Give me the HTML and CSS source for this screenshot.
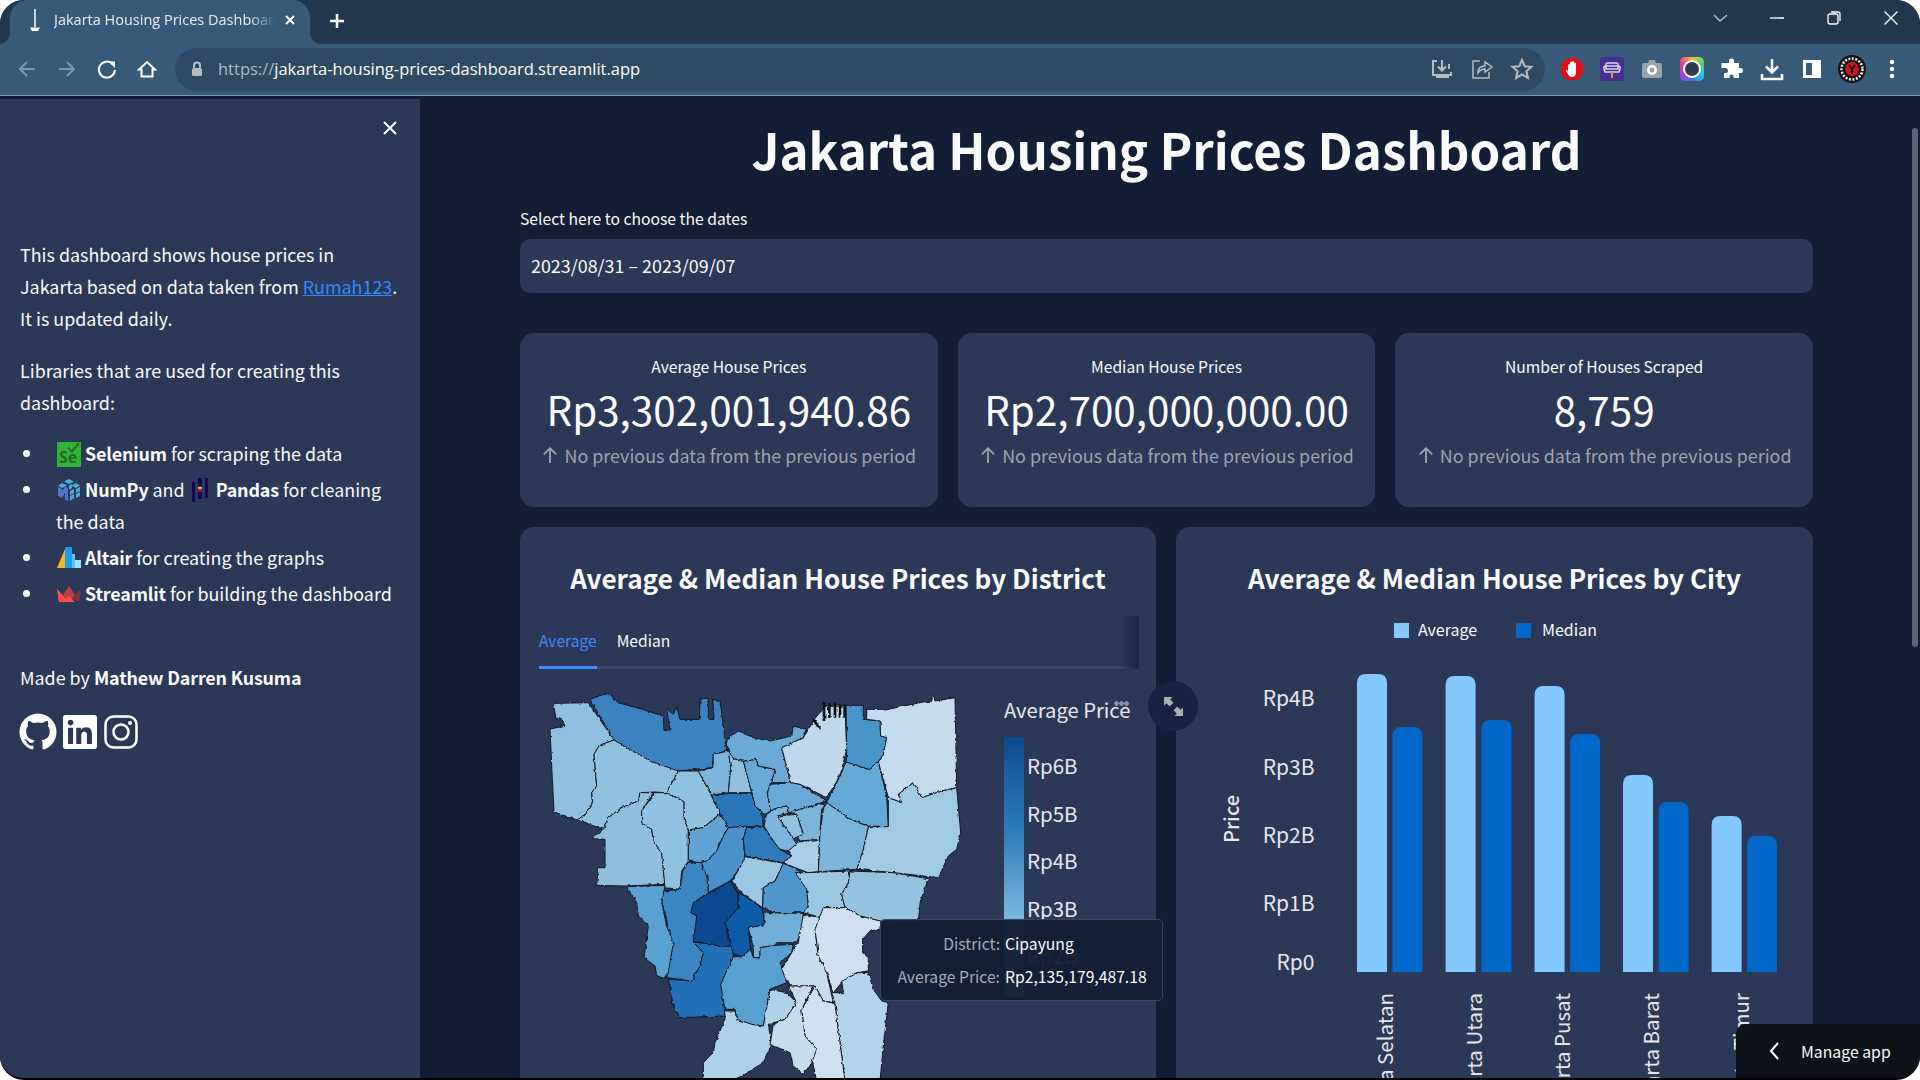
FILE: index.html
```html
<!DOCTYPE html>
<html lang="en">
<head>
<meta charset="utf-8">
<title>Jakarta Housing Prices Dashboard</title>
<link rel="stylesheet" href="styles.css">
</head>
<body>
<div class="window">
  <div class="tabstrip">
    <div class="tab">
      <svg class="favicon" viewBox="0 0 14 24"><path d="M7 1V19" class="st-w st15"/><path d="M2 19.500H12L10 23H4Z" class="fl-w"/></svg>
      <span class="tab-title">Jakarta Housing Prices Dashboard</span>
      <svg class="tab-x" viewBox="0 0 12 12"><path d="M2 2L10 10M10 2L2 10" class="st-w st2"/></svg>
    </div>
    <svg class="tab-plus" viewBox="0 0 20 20"><path d="M10 3V17M3 10H17" class="st-w st25"/></svg>
    <div class="winctl">
      <svg viewBox="0 0 20 20"><path d="M4 7L10 13L17 7" class="st-g"/></svg>
      <svg viewBox="0 0 20 20"><path d="M3 10H17" class="st-w st1"/></svg>
      <svg viewBox="0 0 20 20"><rect x="4" y="6" width="10" height="10" rx="2" class="st-w st1"/><path d="M7 4H14Q16 4 16 6V13" class="st-w st1"/></svg>
      <svg viewBox="0 0 20 20"><path d="M3.500 3.500L16.500 16.500M16.500 3.500L3.500 16.500" class="st-w st1"/></svg>
    </div>
  </div>
  <div class="toolbar">
    <svg class="tb" viewBox="0 0 20 20"><path d="M18 10H3M10 3L3 10L10 17" class="st-d st2"/></svg>
    <svg class="tb" viewBox="0 0 20 20"><path d="M2 10H17M10 3L17 10L10 17" class="st-d st2"/></svg>
    <svg class="tb" viewBox="0 0 20 20"><path d="M15.800 5.200A8 8 0 1 0 17.900 11" class="st-w st2"/><path d="M11.500 2H18V8.500Z" class="fl-w" transform="translate(0 .5)"/></svg>
    <svg class="tb" viewBox="0 0 20 20"><path d="M10 3L18 10.500H15.500V17.500H4.500V10.500H2Z" class="st-w st2"/></svg>
    <div class="omnibox">
      <svg class="lock" viewBox="0 0 12 16"><path d="M3 7V4.500A3 3 0 0 1 9 4.500V7" class="st-g st2"/><rect x="1" y="7" width="10" height="8" rx="1.500" class="fl-g"/></svg>
      <span class="url"><span class="url-dim">https://</span>jakarta-housing-prices-dashboard.streamlit.app</span>
      <div class="omni-right">
        <svg class="tb24" viewBox="0 0 24 24"><path d="M7 4H3V18H21V15M12 3V13M8 9.500L12 13.500L16 9.500M19 7V12" class="st-g st2"/><rect x="6" y="18" width="13" height="3" class="fl-g"/></svg>
        <svg class="tb24" viewBox="0 0 24 24"><path d="M10 4H3V21H19V15" class="st-g st15"/><path d="M8 16C8 11 11 9 15 9V5L22 10L15 15V12C12 12 10 13 8 16Z" class="st-g st15"/></svg>
        <svg class="tb24" viewBox="0 0 24 24"><path d="M12 3L14.700 9.200L21.500 9.800L16.400 14.300L17.900 21L12 17.500L6.100 21L7.600 14.300L2.500 9.800L9.300 9.200Z" class="st-g st2"/></svg>
      </div>
    </div>
    <div class="exts">
      <svg class="tb24" viewBox="0 0 24 24"><path d="M7 1H17L23 7V17L17 23H7L1 17V7Z" fill="#e0101a"/><path d="M8 15V8.500Q8 7 9 7T10 8.500V6Q10 4.500 11 4.500T12 6V5.500Q12 4 13 4T14 5.500V7Q14 5.500 15 5.500T16 7V15Q16 20 12 20Q9.500 20 8 17.500L6 13.500Q6 12.500 7 13Z" class="fl-w"/></svg>
      <svg class="tb24" viewBox="0 0 24 24"><rect width="24" height="24" rx="2" fill="#46308f"/><path d="M7 6H17Q18 6 18 8V9Q21 9 20 12L19 15H5L4 12Q3 9 6 9V8Q6 6 7 6ZM6 9H18V12H6Z" fill="none" stroke="#ddd6f5" stroke-width="1.500"/><path d="M12 15V21" stroke="#e0a020" stroke-width="2"/></svg>
      <svg class="tb24" viewBox="0 0 24 24"><path d="M2 8Q2 6 4 6H8L9 3H15L16 6H20Q22 6 22 8V19Q22 21 20 21H4Q2 21 2 19Z" fill="#9aa2aa"/><circle cx="12" cy="13" r="5" fill="#fff"/><circle cx="12" cy="13" r="2.500" fill="#9aa2aa"/></svg>
      <div class="lens"><span class="lens-ring"></span></div>
      <svg class="tb24" viewBox="0 0 24 24"><path d="M9 3.500Q9 1.500 11.500 1.500T14 3.500V6H19V11H21Q23 11 23 13.500T21 16H19V21H13.500V19Q13.500 17.500 11.500 17.500T9.500 19V21H4V16H6Q8 16 8 13.500T6 11H1.500V6H9Z" class="fl-w"/></svg>
      <svg class="tb24" viewBox="0 0 24 24"><path d="M12 2V15M6 9.500L12 15.500L18 9.500M2 17V22H22V17" class="st-w st25"/></svg>
      <svg class="tb24" viewBox="0 0 24 24"><path d="M3 3H21V21H3ZM6 6V18H12V6Z" class="fl-w" fill-rule="evenodd"/><rect x="15" y="3" width="6" height="18" class="fl-w"/></svg>
      <svg class="tb28" viewBox="0 0 28 28"><circle cx="14" cy="14" r="14" fill="#141414"/><circle cx="14" cy="14" r="10.500" fill="none" stroke="#eee" stroke-width="2.500" stroke-dasharray="2 1.500"/><circle cx="14" cy="14" r="7" fill="#d0101a"/><path d="M11 10L14 14L17 10M14 14V19" stroke="#111" stroke-width="2" fill="none"/></svg>
      <svg class="tb24" viewBox="0 0 24 24"><circle cx="12" cy="5" r="2.200" class="fl-w"/><circle cx="12" cy="12" r="2.200" class="fl-w"/><circle cx="12" cy="19" r="2.200" class="fl-w"/></svg>
    </div>
  </div>

  <div class="app">
    <aside class="sidebar">
      <svg class="side-close" viewBox="0 0 16 16"><path d="M2 2L14 14M14 2L2 14" class="st-w st2"/></svg>
      <p>This dashboard shows house prices in Jakarta based on data taken from <a href="#">Rumah123</a>. It is updated daily.</p>
      <p>Libraries that are used for creating this dashboard:</p>
      <ul>
        <li><span class="se-icon"><span class="se-text">Se</span><svg class="se-check" viewBox="0 0 12 10"><path d="M1 5L4.500 8.500L11 1" fill="none" stroke="#2f6e28" stroke-width="2"/></svg></span> <b>Selenium</b> for scraping the data</li>
        <li><svg class="lib" viewBox="0 0 24 24"><path d="M12 1L17 3.500L12 6L7 3.500ZM5 5L10 7.500L5 10L1 7.500ZM19 5L23 7.500L19 10L14 7.500Z" fill="#4dabcf"/><path d="M12 7.500L15 6V10L12 12ZM19 11L23 9V13L19 15ZM19 16L23 14V18L19 20ZM13 13L17 11V15L13 17ZM13 18L17 16V20L13 23Z" fill="#4dabcf"/><path d="M1 9L5 11V13.500L8 8.500L11 10V23L8 21.500V15L5 20V17L5 20L1 18Z" fill="#4d77cf"/></svg> <b>NumPy</b> and <svg class="lib pandas" viewBox="0 0 16 24"><path d="M0 4H3V24H0ZM6 0H10V8H6ZM6 13H10V21H6ZM13 0H16V20H13Z" fill="#150458"/><rect x="6" y="9" width="4" height="1.800" fill="#ffca00"/><rect x="6" y="11.500" width="4" height="1.800" fill="#e70488"/></svg> <b>Pandas</b> for cleaning the data</li>
        <li><svg class="lib" viewBox="0 0 24 22"><path d="M8 2L0 21H8Z" fill="#f5b81c"/><path d="M8 0H15V21H8Z" fill="#1f9bf0"/><path d="M15 7H18V21H15Z" fill="#56c4fb"/><path d="M18 13H24V21H18Z" fill="#a4e0ff"/></svg> <b>Altair</b> for creating the graphs</li>
        <li><svg class="lib" viewBox="0 0 24 16"><path d="M0 3L9 13H5L4 16H2Z" fill="#ff4b4b"/><path d="M24 3L15 13L22 16Z" fill="#7d353b"/><path d="M12 0L18 9L12 16L6 9Z" fill="#bd4043"/><path d="M0 3L12 16H2Z" fill="#ff4b4b"/><path d="M12 10L18 16H6Z" fill="#ff4b4b"/></svg> <b>Streamlit</b> for building the dashboard</li>
      </ul>
      <p class="made">Made by <b>Mathew Darren Kusuma</b></p>
      <div class="socials">
        <svg class="s-gh" viewBox="0 0 24 24"><path class="fl-w" d="M12 .297c-6.630 0-12 5.373-12 12 0 5.303 3.438 9.800 8.205 11.385.600.113.820-.258.820-.577 0-.285-.010-1.040-.015-2.040-3.338.724-4.042-1.610-4.042-1.610C4.422 18.070 3.633 17.700 3.633 17.700c-1.087-.744.084-.729.084-.729 1.205.084 1.838 1.236 1.838 1.236 1.070 1.835 2.809 1.305 3.495.998.108-.776.417-1.305.760-1.605-2.665-.300-5.466-1.332-5.466-5.930 0-1.310.465-2.380 1.235-3.220-.135-.303-.540-1.523.105-3.176 0 0 1.005-.322 3.300 1.230.960-.267 1.980-.399 3-.405 1.020.006 2.040.138 3 .405 2.280-1.552 3.285-1.230 3.285-1.230.645 1.653.240 2.873.120 3.176.765.840 1.230 1.910 1.230 3.220 0 4.610-2.805 5.625-5.475 5.920.420.360.810 1.096.810 2.220 0 1.606-.015 2.896-.015 3.286 0 .315.210.690.825.570C20.565 22.092 24 17.592 24 12.297c0-6.627-5.373-12-12-12"/></svg>
        <svg class="s-in" viewBox="0 0 24 24"><path class="fl-w" d="M20.447 20.452h-3.554v-5.569c0-1.328-.027-3.037-1.852-3.037-1.853 0-2.136 1.445-2.136 2.939v5.667H9.351V9h3.414v1.561h.046c.477-.900 1.637-1.850 3.370-1.850 3.601 0 4.267 2.370 4.267 5.455v6.286zM5.337 7.433c-1.144 0-2.063-.926-2.063-2.065 0-1.138.920-2.063 2.063-2.063 1.140 0 2.064.925 2.064 2.063 0 1.139-.925 2.065-2.064 2.065zm1.782 13.019H3.555V9h3.564v11.452zM22.225 0H1.771C.792 0 0 .774 0 1.729v20.542C0 23.227.792 24 1.771 24h20.451C23.200 24 24 23.227 24 22.271V1.729C24 .774 23.200 0 22.222 0h.003z"/></svg>
        <svg class="s-ig" viewBox="0 0 34 34"><rect x="1.500" y="1.500" width="31" height="31" rx="8" class="st-w st25"/><circle cx="17" cy="17" r="7.500" class="st-w st25"/><circle cx="26" cy="8" r="2" class="fl-w"/></svg>
      </div>
    </aside>

    <main class="main">
      <h1>Jakarta Housing Prices Dashboard</h1>
      <label class="date-label">Select here to choose the dates</label>
      <div class="date-input">2023/08/31 – 2023/09/07</div>

      <section class="metrics">
        <div class="metric">
          <div class="m-label">Average House Prices</div>
          <div class="m-value">Rp3,302,001,940.86</div>
          <div class="m-delta"><svg class="m-arrow" viewBox="0 0 16 16"><path d="M8 15V2M2.500 7.500L8 2L13.500 7.500" class="st-delta"/></svg>No previous data from the previous period</div>
        </div>
        <div class="metric">
          <div class="m-label">Median House Prices</div>
          <div class="m-value">Rp2,700,000,000.00</div>
          <div class="m-delta"><svg class="m-arrow" viewBox="0 0 16 16"><path d="M8 15V2M2.500 7.500L8 2L13.500 7.500" class="st-delta"/></svg>No previous data from the previous period</div>
        </div>
        <div class="metric">
          <div class="m-label">Number of Houses Scraped</div>
          <div class="m-value">8,759</div>
          <div class="m-delta"><svg class="m-arrow" viewBox="0 0 16 16"><path d="M8 15V2M2.500 7.500L8 2L13.500 7.500" class="st-delta"/></svg>No previous data from the previous period</div>
        </div>
      </section>

      <section class="charts">
        <div class="chart chart-map">
          <h2>Average &amp; Median House Prices by District</h2>
          <div class="tabs">
            <span class="tabitem active">Average</span>
            <span class="tabitem">Median</span>
            <span class="tabs-fade"></span>
          </div>
          <div class="mapzone">
            <svg class="map" viewBox="0 0 1320 1185">
              <defs>
                <filter id="rough" x="-2%" y="-2%" width="104%" height="104%">
                  <feTurbulence type="fractalNoise" baseFrequency="0.07" numOctaves="2" seed="4"/>
                  <feDisplacementMap in="SourceGraphic" scale="9" xChannelSelector="R" yChannelSelector="G"/>
                </filter>
              </defs>
              <g class="districts" filter="url(#rough)">
                <path fill="#8fc0df" d="M40 52L145 50L222 162L178 178L162 205L170 300L155 320L158 350L135 385L112 402L42 378L36 260L30 130L75 118L60 95L48 98Z"/>
                <path fill="#3a82c0" d="M150 40L205 20L235 50L300 68L370 90L372 133L390 133L380 68L400 85L410 60L420 100L478 100L480 40L505 36L505 100L522 100L518 40L540 45L560 195L520 205L518 245L415 255L330 225L270 195L222 162Z"/>
                <path fill="#90c2e0" d="M222 162L330 225L415 255L380 320L345 318L300 320L295 345L245 365L205 395L190 430L112 402L135 385L158 350L155 320L170 300L162 205L178 178Z"/>
                <path fill="#8ebfde" d="M300 320L340 320L305 375L305 410L335 430L340 465L365 500L375 595L255 600L170 598L175 545L195 545L195 460L155 458L190 430L205 395L245 365L295 345Z"/>
                <path fill="#8fc1e0" d="M345 320L380 320L432 347L433 400L445 432L445 525L425 555L420 610L375 605L365 500L340 465L335 430L305 410L305 375Z"/>
                <path fill="#8fc1e0" d="M415 255L475 255L515 330L540 382L490 425L445 432L433 400L432 347L380 320Z"/>
                <path fill="#7db4da" d="M475 255L518 245L520 205L565 195L572 245L565 320L515 328Z"/>
                <path fill="#8fc0e0" d="M565 195L585 222L610 225L635 320L565 320L572 245Z"/>
                <path fill="#6aa9d6" d="M610 225L650 220L655 240L705 250L695 290L682 320L692 375L675 385L645 360L635 320Z"/>
                <path fill="#6caad6" d="M560 160L595 135L640 155L690 165L755 150L760 120L780 125L800 130L790 155L725 185L752 290L695 290L705 250L655 240L650 220L610 225L585 222L565 195Z"/>
                <path fill="#2a78ba" d="M515 330L565 322L635 322L645 360L665 380L670 420L565 425L540 382Z"/>
                <path fill="#5fa4d3" d="M540 385L565 425L550 450L530 495L500 525L480 530L445 525L445 432L490 425Z"/>
                <path fill="#4a91c8" d="M565 425L620 420L610 460L615 515L600 545L570 585L505 620L500 570L482 530L500 525L530 495L550 450Z"/>
                <path fill="#2e7aba" d="M620 425L670 422L700 465L720 490L755 510L730 530L615 510L610 460Z"/>
                <path fill="#9ac7e2" d="M615 512L730 532L705 585L670 605L668 665L610 625L575 585L600 545Z"/>
                <path fill="#6aa9d6" d="M690 295L752 290L780 295L860 345L780 370L745 382L740 360L710 365L692 375L682 320Z"/>
                <path fill="#bfd8ec" d="M725 185L790 155L830 90L860 60L915 60L920 190L900 270L860 335L780 295L752 290Z"/>
                <path fill="#4794c8" d="M918 58L970 58L970 100L1020 105L1022 150L1040 155L1030 205L1015 228L985 250L918 228L920 190Z"/>
                <path fill="#65a9d5" d="M918 228L985 250L1015 228L1040 330L1045 422L985 420L935 402L860 350L900 270Z"/>
                <path fill="#c5dcef" d="M980 70L1030 70L1035 72L1150 48L1175 45L1180 25L1185 45L1245 35L1250 305L1205 315L1145 335L1120 290L1075 325L1085 350L1045 335L1015 228L1030 205L1040 155L1022 150L1020 105L980 100Z"/>
                <path fill="#a0cbe4" d="M1045 335L1085 350L1075 325L1120 290L1145 335L1205 315L1250 305L1262 440L1250 490L1225 510L1195 575L1060 560L950 550L975 470L985 422L1045 422Z"/>
                <path fill="#7db5da" d="M860 350L935 402L985 422L970 490L950 550L835 557L840 440L850 370Z"/>
                <path fill="#7db5da" d="M780 370L860 350L845 370L838 460L780 465L765 440L790 445L770 385L745 382Z"/>
                <path fill="#7db5da" d="M680 385L710 365L740 360L745 382L712 390L760 458L770 475L745 495L720 490L700 465L672 420Z"/>
                <path fill="#91c3e0" d="M712 390L770 385L790 445L760 458Z"/>
                <path fill="#a6cfe6" d="M745 495L775 468L838 460L835 557L805 560L765 545L730 530L755 510Z"/>
                <path fill="#4f97cc" d="M730 532L765 547L790 570L800 610L805 660L790 680L700 680L668 665L670 605L705 585Z"/>
                <path fill="#9bc8e3" d="M800 560L930 555L925 590L905 625L915 665L855 665L845 695L790 680L805 660L800 610L765 560Z"/>
                <path fill="#93c3e0" d="M930 555L1060 560L1165 578L1140 650L1135 710L1020 705L960 690L915 665L905 625L925 590Z"/>
                <path fill="#0a4a90" d="M505 622L572 585L595 625L595 665L560 705L560 740L575 780L540 782L520 775L460 768L460 735L470 690L452 680L460 650Z"/>
                <path fill="#0f5aa6" d="M595 620L615 630L668 668L672 718L625 725L632 790L605 812L575 800L565 745L555 710L595 665Z"/>
                <path fill="#3a86c2" d="M370 615L420 610L428 555L445 528L482 530L500 570L505 620L460 650L452 680L470 690L460 768L490 800L480 840L455 885L380 875L390 800L380 700L365 650Z"/>
                <path fill="#5aa2d1" d="M260 602L375 598L365 650L380 720L400 770L385 860L375 878L350 870L345 840L312 815L325 720L295 690L290 650Z"/>
                <path fill="#206fb5" d="M460 768L520 775L540 782L575 780L580 812L545 890L555 990L420 995L400 960L385 880L455 885L480 840L490 800Z"/>
                <path fill="#72afd7" d="M625 725L672 718L672 680L790 682L790 720L770 770L710 770L705 778L660 785L660 815L640 815L640 785Z"/>
                <path fill="#58a0d0" d="M580 812L605 812L632 790L640 815L660 815L660 785L705 778L760 775L755 800L720 830L740 890L690 910L670 1020L635 1015L590 1000L585 970L555 970L542 895Z"/>
                <path fill="#aed2e8" d="M555 975L585 975L590 1000L635 1015L670 1020L690 910L740 920L770 950L735 1000L685 1015L695 1075L670 1130L580 1185L490 1185L490 1130L520 1100L525 1070L555 1000Z"/>
                <path fill="#c6dcef" d="M790 685L845 695L825 730L835 810L860 860L880 950L850 945L825 900L750 900L725 850L755 800L775 770Z"/>
                <path fill="#cfe0f2" d="M850 665L915 665L960 690L1020 705L1020 730L990 735L968 760L968 800L985 815L985 855L950 860L905 890L880 920L860 860L835 810L825 730Z"/>
                <path fill="#b3d3ea" d="M985 860L1000 910L1025 945L1045 950L1030 1080L1020 1185L915 1185L885 955L875 920L910 920L905 885L950 860Z"/>
                <path fill="#cfe1f3" d="M875 950L885 955L915 1185L830 1185L815 1115L830 1090L795 1050L785 970L825 900L850 945Z"/>
                <path fill="#c6dcef" d="M820 900L785 970L795 1050L830 1090L815 1130L790 1165L760 1140L750 1100L690 1075L700 1015L735 1000L770 950L745 900Z"/>
                <path class="teeth" d="M852 48V105M868 52V95M885 52V95M900 55V95M914 55V95M820 100L840 130"/>
              </g>
            </svg>
            <div class="map-legend">
              <div class="ml-title">Average Price<span class="ml-dots"></span></div>
              <div class="ml-body">
                <div class="ml-bar"></div>
                <div class="ml-ticks"><span>Rp6B</span><span>Rp5B</span><span>Rp4B</span><span>Rp3B</span><span>Rp2B</span></div>
              </div>
            </div>
          </div>
          <div class="tooltip">
            <span class="t-key">District:</span><span class="t-val">Cipayung</span>
            <span class="t-key">Average Price:</span><span class="t-val">Rp2,135,179,487.18</span>
          </div>
          <div class="expand"><svg viewBox="0 0 20 20"><path d="M0 0H9L6.500 2.500L10 6L6 10L2.500 6.500L0 9ZM20 20H11L13.500 17.500L10 14L14 10L17.500 13.500L20 11Z" class="fl-ex"/></svg></div>
        </div>

        <div class="chart chart-bars">
          <h2>Average &amp; Median House Prices by City</h2>
          <svg class="bars" viewBox="0 0 637 470">
            <rect x="218" y="13" width="15" height="15" class="avg"/>
            <text x="242" y="26" class="lg">Average</text>
            <rect x="340" y="13" width="15" height="15" class="med"/>
            <text x="366" y="26" class="lg">Median</text>

            <text x="138.500" y="96" class="yt">Rp4B</text>
            <text x="138.500" y="165" class="yt">Rp3B</text>
            <text x="138.500" y="233" class="yt">Rp2B</text>
            <text x="138.500" y="301" class="yt">Rp1B</text>
            <text x="138.500" y="360" class="yt">Rp0</text>
            <text transform="translate(63,209) rotate(-90)" class="yl">Price</text>

            <path class="avg" d="M181 362V73Q181 64 190 64H202Q211 64 211 73V362Z"/>
            <path class="med" d="M216.500 362V126Q216.500 117 225.500 117H237.500Q246.500 117 246.500 126V362Z"/>
            <path class="avg" d="M269.600 362V75Q269.600 66 278.600 66H290.600Q299.600 66 299.600 75V362Z"/>
            <path class="med" d="M305.500 362V119Q305.500 110 314.500 110H326.500Q335.500 110 335.500 119V362Z"/>
            <path class="avg" d="M358.600 362V85Q358.600 76 367.600 76H379.600Q388.600 76 388.600 85V362Z"/>
            <path class="med" d="M394 362V133Q394 124 403 124H415Q424 124 424 133V362Z"/>
            <path class="avg" d="M447 362V174Q447 165 456 165H468Q477 165 477 174V362Z"/>
            <path class="med" d="M482.500 362V201Q482.500 192 491.500 192H503.500Q512.500 192 512.500 201V362Z"/>
            <path class="avg" d="M535.600 362V215Q535.600 206 544.600 206H556.600Q565.600 206 565.600 215V362Z"/>
            <path class="med" d="M571 362V235Q571 226 580 226H592Q601 226 601 235V362Z"/>

            <text transform="translate(217,383) rotate(-90)" class="xt">Jakarta Selatan</text>
            <text transform="translate(306,383) rotate(-90)" class="xt">Jakarta Utara</text>
            <text transform="translate(394,383) rotate(-90)" class="xt">Jakarta Pusat</text>
            <text transform="translate(483,383) rotate(-90)" class="xt">Jakarta Barat</text>
            <text transform="translate(573,383) rotate(-90)" class="xt">Jakarta Timur</text>
          </svg>
        </div>
      </section>
      <div class="scrollthumb"></div>
    </main>
    <div class="manage">
      <svg viewBox="0 0 12 20"><path d="M10 2L3 10L10 18" class="st-w st2"/></svg>
      <span>Manage app</span>
    </div>
  </div>
</div>
</body>
</html>
```

FILE: styles.css
```css
* { box-sizing: border-box; }
html, body { margin: 0; height: 100%; background: #fff; overflow: hidden; }
body { font-family: "Noto Sans CJK SC", "Noto Sans", sans-serif; color: #fafafa; }
svg { display: block; flex: none; }

.st-w { fill: none; stroke: #fff; }
.st-g { fill: none; stroke: #b4bcc4; stroke-width: 1.5; }
.st-d { fill: none; stroke: #8097ab; }
.st1 { stroke-width: 1.3; }
.st15 { stroke-width: 1.5; }
.st2 { stroke-width: 2; }
.st25 { stroke-width: 2.5; }
.fl-w { fill: #fff; }
.fl-g { fill: #b4bcc4; }

.window {
  width: 1920px; height: 1080px;
  display: flex; flex-direction: column;
  overflow: hidden;
  border-radius: 24px;
  border-bottom: 2px solid #000;
  background: #131d36;
}

/* browser chrome */
.tabstrip {
  height: 44px; flex: none;
  display: flex; align-items: flex-start;
  background: #22384f;
  padding-left: 10px;
}
.tab {
  position: relative;
  width: 300px; height: 44px;
  background: #375a78;
  border-radius: 18px 18px 0 0;
  display: flex; align-items: center;
  padding: 0 14px 4px 18px;
}
.tab::before, .tab::after {
  content: ""; position: absolute; bottom: 0; width: 10px; height: 10px;
}
.tab::before { left: -10px; background: radial-gradient(circle at 0 0, transparent 9.5px, #375a78 10px); }
.tab::after { right: -10px; background: radial-gradient(circle at 100% 0, transparent 9.5px, #375a78 10px); }
.favicon { width: 14px; height: 24px; margin-right: 12px; }
.tab-title {
  font: 14.5px/20px "Open Sans", sans-serif; color: #e8eef4;
  width: 222px; white-space: nowrap; overflow: hidden;
  -webkit-mask-image: linear-gradient(90deg, #000 88%, transparent);
  mask-image: linear-gradient(90deg, #000 88%, transparent);
}
.tab-x { width: 12px; height: 12px; margin-left: 8px; }
.tab-plus { width: 20px; height: 20px; margin: 11px 0 0 17px; }
.winctl { margin-left: auto; display: flex; gap: 37px; padding: 8px 19px 0 0; }
.winctl svg { width: 20px; height: 20px; }

.toolbar {
  height: 52px; flex: none;
  display: flex; align-items: center; gap: 20px;
  padding: 0 0 1px 17px;
  background: #375a78;
  border-bottom: 1px solid #7d9ab5;
}
.tb { width: 20px; height: 20px; }
.tb24 { width: 24px; height: 24px; }
.tb28 { width: 28px; height: 28px; margin: 0 -2px; }
.omnibox {
  width: 1370px; height: 43px; margin-left: -2px;
  display: flex; align-items: center;
  background: #2e4a62;
  border-radius: 22px;
  padding: 0 11px 0 16px;
}
.lock { width: 12px; height: 16px; margin-right: 15px; }
.url { font: 16.5px/22px "Open Sans", sans-serif; color: #fff; white-space: nowrap; }
.url-dim { color: #b0bcc8; }
.omni-right { margin-left: auto; display: flex; gap: 16px; }
.exts { display: flex; align-items: center; gap: 16px; margin-left: -5px; }
.lens {
  width: 24px; height: 24px; border-radius: 5px;
  display: flex; align-items: center; justify-content: center;
  background: conic-gradient(#f7c32e, #4ad66d, #29c5e6, #3b6df0, #b13be0, #f03b8e, #f7c32e);
}
.lens-ring { width: 18px; height: 18px; border-radius: 50%; background: #2c3e50; border: 2.5px solid #fff; }

/* app */
.app { position: relative; flex: 1; min-height: 0; display: flex; overflow: hidden; }

.sidebar {
  position: relative;
  width: 420px; flex: none;
  margin-top: 3px;
  background: #2c3857;
  padding: 139px 20px 0;
  font-size: 17.9px; line-height: 32px;
}
.side-close { position: absolute; left: 382px; top: 21px; width: 16px; height: 16px; }
.sidebar p { margin: 0 0 20px; }
.sidebar a { color: #2e8bff; text-decoration: underline; }
.sidebar b { font-weight: 700; letter-spacing: -.15px; }
.sidebar ul { list-style: none; margin: -1px 0 0; padding: 0 0 0 36px; }
.sidebar li { position: relative; margin-bottom: 4px; }
.sidebar li::before {
  content: ""; position: absolute; left: -33px; top: 13px;
  width: 7px; height: 7px; border-radius: 50%; background: #fafafa;
}
.lib { display: inline-block; width: 24px; height: 24px; vertical-align: -5px; margin-left: 1px; }
.lib.pandas { width: 16px; margin: 0 4px 0 3px; }
.se-icon {
  position: relative; display: inline-block; width: 24px; height: 25px;
  vertical-align: -6px; background: #2fb536; overflow: hidden; margin-left: 1px;
}
.se-text { position: absolute; left: 2px; top: 5px; font: 700 16px/20px "Noto Sans", sans-serif; color: #276b24; }
.se-check { position: absolute; right: 1px; top: 0; width: 13px; height: 11px; }
.made { margin-top: 52px !important; margin-bottom: 20px !important; }
.socials { display: flex; align-items: center; }
.s-gh { width: 38px; height: 37px; margin-left: -1px; }
.s-in { width: 34px; height: 34px; margin-left: 6px; }
.s-ig { width: 34px; height: 34px; margin-left: 7px; }

.main { position: relative; flex: 1; min-width: 0; padding: 0 107px 0 100px; }
h1 {
  margin: 15px 0 0; height: 76px;
  text-align: center;
  font-size: 49.3px; line-height: 76px; font-weight: 700; color: #fafafa;
}
.date-label { display: block; margin-top: 20px; font-size: 15.7px; line-height: 24px; }
.date-input {
  margin-top: 8px; height: 54px;
  background: #2c3857; border-radius: 10px;
  padding: 0 11px;
  font-size: 17.9px; line-height: 52px;
}
.metrics { display: grid; grid-template-columns: repeat(3, 1fr); gap: 20px; margin-top: 40px; }
.metric {
  height: 174px;
  background: #2c3857; border-radius: 14px;
  text-align: center;
  padding-top: 22px;
}
.m-label { font-size: 15.65px; line-height: 23px; }
.m-value { font-size: 40.4px; line-height: 60px; margin-top: 1px; }
.m-delta {
  display: flex; align-items: center; justify-content: center;
  font-size: 17.9px; line-height: 28px; color: #9ea4b0; margin-top: 2px;
}
.m-arrow { width: 18px; height: 18px; margin-right: 5px; }
.st-delta { fill: none; stroke: #9ea4b0; stroke-width: 1.6; }

.charts { display: grid; grid-template-columns: 636px 637px; gap: 20px; margin-top: 20px; }
.chart { position: relative; height: 640px; background: #2c3857; border-radius: 14px 14px 0 0; }
h2 {
  margin: 0; padding-top: 31px; height: 83px;
  text-align: center;
  font-size: 26.1px; line-height: 40px; font-weight: 700;
}
.chart-map { padding: 0 19px; }
.tabs {
  position: relative;
  display: flex; gap: 20px;
  height: 55px; margin-right: -2px; margin-top: 4px;
  border-bottom: 3px solid #3e4967;
  font-size: 15.6px; line-height: 53px;
}
.tabitem { position: relative; height: 55px; }
.tabitem.active { color: #3d8bff; }
.tabitem.active::after {
  content: ""; position: absolute; left: 0; right: 0; bottom: 0;
  height: 3px; background: #3d8bff;
}
.tabs-fade {
  position: absolute; right: 0; top: 2px; bottom: -3px; width: 20px;
  background: linear-gradient(90deg, transparent, #1b2642);
}
.mapzone { display: flex; gap: 24px; margin: 17px 0 0 1px; }
.map { width: 440px; height: 395px; }
.districts path { stroke: #12161f; stroke-width: 3; stroke-linejoin: round; }
.districts .teeth { fill: none; stroke: #0b0e14; stroke-width: 8; }
.map-legend { width: 135px; padding-top: 10px; }
.ml-title { position: relative; font-size: 20.2px; line-height: 28px; color: #e6e7ec; white-space: nowrap; }
.ml-dots {
  position: absolute; left: 110px; top: 5px; width: 15px; height: 5px;
  background: radial-gradient(circle at 2.5px 2.5px, #8b93a5 2px, transparent 2.500px) 0 0 / 5px 5px repeat-x;
}
.ml-body { display: flex; gap: 3px; margin-top: 13px; }
.ml-bar { width: 20px; height: 260px; background: linear-gradient(#0d4a8e, #2c7ab9 35%, #71afd8 65%, #a9d0e8); }
.ml-ticks { display: flex; flex-direction: column; gap: 18.500px; padding-top: 14px; font-size: 20.5px; line-height: 29px; color: #e6e7ec; }

.tooltip {
  position: absolute; left: 360px; top: 392px;
  width: 283px; height: 82px;
  display: grid; grid-template-columns: 119px 1fr; column-gap: 5px; align-content: center; row-gap: 9px;
  background: rgba(19, 29, 54, .96);
  border: 1px solid #3a4560; border-radius: 5px;
  font-size: 15.7px; line-height: 24px;
  white-space: nowrap;
}
.t-key { text-align: right; color: #a8adb9; }
.expand {
  position: absolute; left: 628px; top: 154px;
  width: 50px; height: 50px; border-radius: 50%;
  background: #172340;
  display: flex; align-items: center; justify-content: center;
  z-index: 2;
}
.expand svg { width: 19px; height: 19px; }
.fl-ex { fill: #a9aeb9; }

.bars { width: 637px; height: 470px; }
.bars text { font-family: "Noto Sans CJK SC", "Noto Sans", sans-serif; fill: #e6e7ec; }
.bars .lg { font-size: 16px; fill: #fafafa; }
.yt { font-size: 21px; text-anchor: end; }
.yl { font-size: 20px; font-weight: 500; text-anchor: middle; }
.xt { font-size: 20.5px; text-anchor: end; }
.avg { fill: #83c9ff; }
.med { fill: #0068c9; }

.scrollthumb {
  position: absolute; right: 2px; top: 32px;
  width: 6px; height: 519px;
  border-radius: 3px; background: #5b6475;
}
.manage {
  position: absolute; right: 0; bottom: 0;
  width: 184px; height: 54px;
  background: #0e1117;
  border-radius: 10px 0 0 0;
  display: flex; align-items: center;
  padding-left: 32px;
  font-size: 15.8px;
}
.manage svg { width: 12px; height: 20px; margin-right: 21px; }
```
